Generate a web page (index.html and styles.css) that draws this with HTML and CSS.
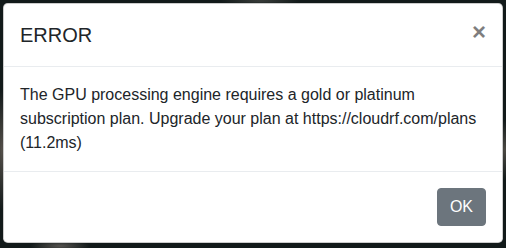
FILE: index.html
```html
<!DOCTYPE html>
<html lang="en">
<head>
<meta charset="utf-8">
<title>Error</title>
<link rel="stylesheet" href="styles.css">
</head>
<body>
<div class="backdrop">
  <div class="modal" role="dialog">
    <div class="modal-header">
      <h5 class="modal-title">ERROR</h5>
      <button class="close" type="button" aria-label="Close">×</button>
    </div>
    <div class="modal-body">
      <p>The GPU processing engine requires a gold or platinum subscription plan. Upgrade your plan at https://cloudrf.com/plans (11.2ms)</p>
    </div>
    <div class="modal-footer">
      <button class="btn" type="button">OK</button>
    </div>
  </div>
</div>
</body>
</html>
```

FILE: styles.css
```css
html, body {
  margin: 0;
  padding: 0;
}

body {
  width: 506px;
  height: 248px;
  overflow: hidden;
  font-family: "Liberation Sans", Arial, sans-serif;
  font-size: 16px;
  line-height: 1.5;
  color: #212529;
  background:
    radial-gradient(ellipse 10px 60px at 2px 150px, #55504a 0%, rgba(85,80,74,0) 100%),
    radial-gradient(ellipse 30px 6px at 60px 246px, #55534f 0%, rgba(85,83,79,0) 100%),
    radial-gradient(ellipse 14px 30px at 505px 150px, #4c4944 0%, rgba(76,73,68,0) 100%),
    radial-gradient(ellipse 40px 4px at 260px 1px, #3a3d3b 0%, rgba(58,61,59,0) 100%),
    #121a1a;
}

.backdrop {
  padding: 3px;
}

.modal {
  width: 500px;
  box-sizing: border-box;
  background: #fff;
  border: 1px solid rgba(0, 0, 0, 0.2);
  border-radius: 0.3rem;
  display: flex;
  flex-direction: column;
}

.modal-header {
  display: flex;
  align-items: flex-start;
  justify-content: space-between;
  padding: 16px;
  border-bottom: 1px solid #e9ecef;
}

.modal-title {
  margin: 0;
  font-size: 20px;
  font-weight: 400;
  line-height: 1.5;
}

.close {
  padding: 16px;
  margin: -16px -16px -16px auto;
  background: transparent;
  border: 0;
  font-family: "Liberation Sans", Arial, sans-serif;
  font-size: 24px;
  font-weight: 700;
  line-height: 1;
  color: #000;
  text-shadow: 0 1px 0 #fff;
  opacity: 0.5;
  cursor: pointer;
}

.modal-body {
  padding: 16px;
}

.modal-body p {
  margin: 0;
}

.modal-footer {
  display: flex;
  align-items: center;
  justify-content: flex-end;
  padding: 16px;
  border-top: 1px solid #e9ecef;
}

.btn {
  font-family: "Liberation Sans", Arial, sans-serif;
  font-size: 16px;
  line-height: 1.5;
  padding: 6px 12px;
  color: #fff;
  background: #6c757d;
  border: 1px solid #6c757d;
  border-radius: 0.25rem;
  cursor: pointer;
}
```
